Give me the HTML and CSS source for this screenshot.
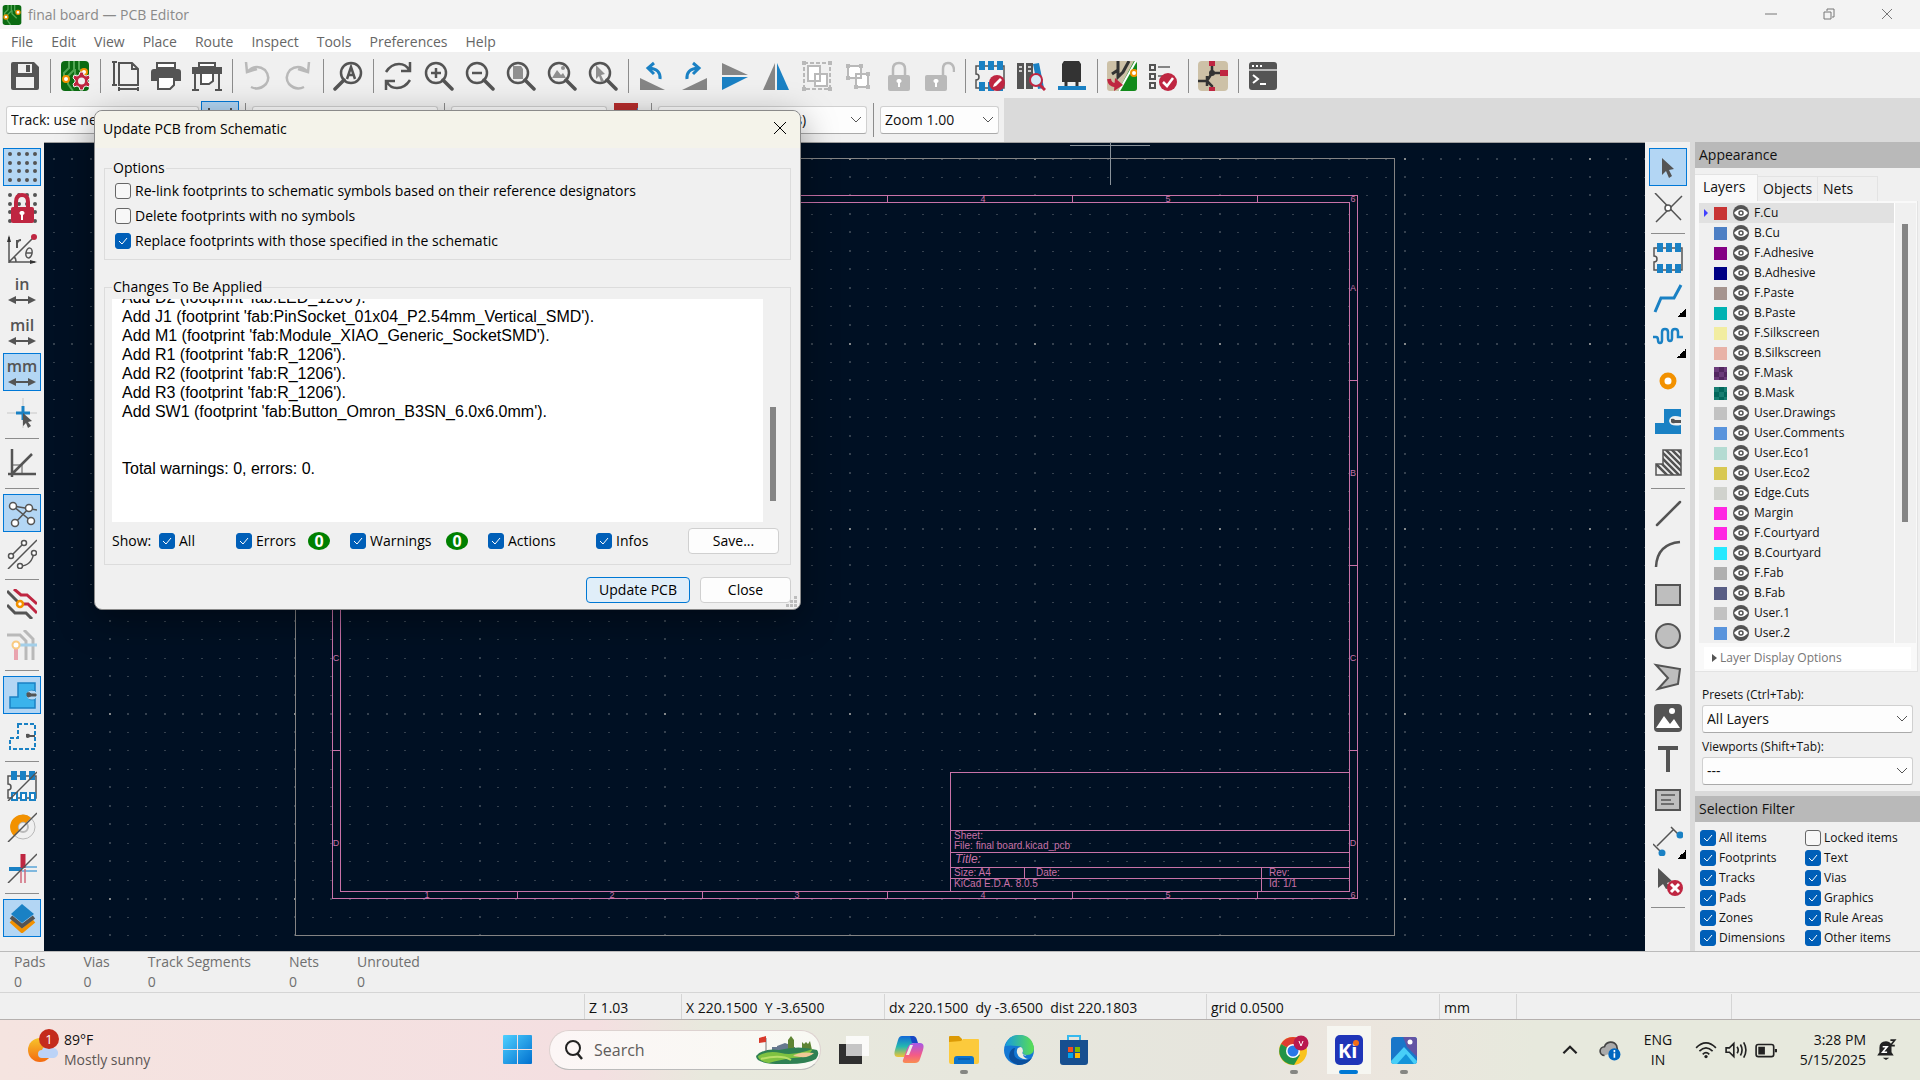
FILE: index.html
```html
<!DOCTYPE html>
<html lang="en">
<head>
    <meta charset="UTF-8">
    <meta name="viewport" content="width=device-width, initial-scale=1.0">
    <title>final board — PCB Editor</title>
    <link rel="stylesheet" href="styles.css">
</head>
<body>
    <!-- icon set -->
    <svg class="sprite" aria-hidden="true">
        <symbol id="board" viewBox="0 0 30 30"><rect x="1" width="28" height="30" rx="4" fill="#0b6b12"/><path d="M9 0v7l-5 5v8M14 0v9l-6 6v8l5 7M19 0v8l5 4M22 20l-7-7v-5" fill="none" stroke="#4fa552" stroke-width="2"/><circle cx="6" cy="18" r="3" fill="#fff" stroke="#f29100" stroke-width="2"/><circle cx="24" cy="11" r="3" fill="#fff" stroke="#f29100" stroke-width="2"/></symbol>
        <symbol id="gear" viewBox="0 0 30 30"><g stroke="#f0f0f0" stroke-width="1"><path d="M20 11h3l1 3 2 1 3-1 1 3-2 2v2l2 2-1 3-3-1-2 1-1 3h-3l-1-3-2-1-3 1-1-3 2-2v-2l-2-2 1-3 3 1 2-1z" fill="#bf2641"/></g><circle cx="21.500" cy="20" r="3.500" fill="#f0f0f0"/></symbol>
        <symbol id="save" viewBox="0 0 30 30"><path d="M3 1h21l5 5v21q0 2-2 2H3q-2 0-2-2V3q0-2 2-2z" fill="#545454"/><path d="M8 3h14v9H8zM6 16h18v11H6z" fill="#f0f0f0"/><path d="M16 4h4v7h-4z" fill="#545454"/></symbol>
        <symbol id="page" viewBox="0 0 30 30"><path d="M9 2h13l6 6v16H9zM22 2v6h6M2 1h5M4 1v23M2 24h5M9 28h19M9 26v4M28 26v4" fill="none" stroke="#545454" stroke-width="2"/></symbol>
        <symbol id="print" viewBox="0 0 30 30"><path d="M6 2h18v5H6z" fill="#fff" stroke="#545454" stroke-width="2"/><path d="M3 8h24q3 0 3 3v9h-6v-5H6v5H0v-9q0-3 3-3z" fill="#545454"/><path d="M7 16h16v8l-4 4H7z" fill="#fff" stroke="#545454" stroke-width="2"/></symbol>
        <symbol id="plot" viewBox="0 0 30 30"><path d="M7 2h16v4H7z" fill="#fff" stroke="#545454" stroke-width="2"/><path d="M0 6h30v7H0z" fill="#545454"/><path d="M3 12v16M27 12v16M0 29h7M23 29h7" stroke="#545454" stroke-width="2"/><path d="M9 12h12v8l-4 3H9z" fill="#fff" stroke="#545454" stroke-width="2"/></symbol>
        <symbol id="undo" viewBox="0 0 30 30"><path d="M4 1l1 10 10-3M5 11Q14 2 23 9q6 7 1 14-7 7-15 3" fill="none" stroke="#b9b9b9" stroke-width="2.500"/></symbol>
        <symbol id="redo" viewBox="0 0 30 30"><path d="M26 1l-1 10-10-3M25 11Q16 2 7 9q-6 7-1 14 7 7 15 3" fill="none" stroke="#b9b9b9" stroke-width="2.500"/></symbol>
        <symbol id="lens" viewBox="0 0 30 30"><circle cx="12" cy="12" r="10" fill="none" stroke="#545454" stroke-width="2.500"/><path d="M19 19l9 9" stroke="#545454" stroke-width="3.500" stroke-linecap="round"/></symbol>
        <symbol id="find" viewBox="0 0 30 30"><circle cx="18" cy="12" r="10" fill="none" stroke="#545454" stroke-width="2.500"/><path d="M11 19l-9 9" stroke="#545454" stroke-width="3.500" stroke-linecap="round"/><path d="M14 18l4-12 4 12M15 14h6" fill="none" stroke="#545454" stroke-width="2.500"/></symbol>
        <symbol id="refresh" viewBox="0 0 30 30"><path d="M3 11Q8 3 16 3q7 0 10 6M27 1v9h-9M27 19q-5 8-13 8-7 0-10-6M3 29v-9h9" fill="none" stroke="#545454" stroke-width="2.500"/></symbol>
        <symbol id="plus" viewBox="0 0 30 30"><path d="M12 7v10M7 12h10" stroke="#545454" stroke-width="2.500"/></symbol>
        <symbol id="minus" viewBox="0 0 30 30"><path d="M7 12h10" stroke="#545454" stroke-width="2.500"/></symbol>
        <symbol id="sheet-fill" viewBox="0 0 30 30"><path d="M7 5h8l2 3v10H7z" fill="#8f8f8f"/></symbol>
        <symbol id="hills" viewBox="0 0 30 30"><path d="M5 17l5-8 4 5 2-2 3 5z" fill="#8f8f8f"/><circle cx="16" cy="7" r="2" fill="#8f8f8f"/></symbol>
        <symbol id="arrow-fill" viewBox="0 0 30 30"><path d="M8 4l9 9-4 1 3 6-3 1-2-6-3 3z" fill="#8f8f8f"/></symbol>
        <symbol id="rot-left" viewBox="0 0 30 30"><path d="M2 17l25 12H2z" fill="#858585"/><path d="M22 18q1-10-11-11M16 2l-6 5 6 6" fill="none" stroke="#1a81c4" stroke-width="3"/></symbol>
        <symbol id="rot-right" viewBox="0 0 30 30"><path d="M28 17L3 29h25z" fill="#858585"/><path d="M8 18Q7 8 19 7M14 2l6 5-6 6" fill="none" stroke="#1a81c4" stroke-width="3"/></symbol>
        <symbol id="flip-v" viewBox="0 0 30 30"><path d="M2 2l26 12H2z" fill="#858585"/><path d="M2 16h26L2 29z" fill="#1a81c4"/></symbol>
        <symbol id="flip-h" viewBox="0 0 30 30"><path d="M14 2v27H2z" fill="#858585"/><path d="M16 2v27h12z" fill="#1a81c4"/></symbol>
        <symbol id="group" viewBox="0 0 30 30"><path d="M2 2h26v26H2z" fill="none" stroke="#b9b9b9" stroke-width="2" stroke-dasharray="4 2"/><path d="M0 0h4v4H0zM26 0h4v4h-4zM0 26h4v4H0zM26 26h4v4h-4z" fill="#b9b9b9"/><path d="M6 5h12v15H6zM13 13h12v12H13z" fill="#fff" stroke="#b9b9b9" stroke-width="2"/></symbol>
        <symbol id="ungroup" viewBox="0 0 30 30"><path d="M5 5h13v12H5zM13 13h12v13H13z" fill="#fff" stroke="#b9b9b9" stroke-width="2"/><path d="M3 3h4v4H3zM16 3h4v4h-4zM3 15h4v4H3zM23 11h4v4h-4zM23 24h4v4h-4zM11 24h4v4h-4z" fill="#b9b9b9"/></symbol>
        <symbol id="lock" viewBox="0 0 30 30"><path d="M9 15V8q0-6 6-6t6 6v7" fill="none" stroke="#b9b9b9" stroke-width="2.500"/><rect x="4" y="14" width="22" height="16" rx="2" fill="#b9b9b9"/><path d="M15 18a2 2 0 0 1 1 4v4h-2v-4a2 2 0 0 1 1-4z" fill="#fff"/></symbol>
        <symbol id="unlock" viewBox="0 0 30 30"><path d="M18 15V8q0-6 5-6t6 6v3" fill="none" stroke="#b9b9b9" stroke-width="2.500"/><rect y="14" width="22" height="16" rx="2" fill="#b9b9b9"/><path d="M11 18a2 2 0 0 1 1 4v4h-2v-4a2 2 0 0 1 1-4z" fill="#fff"/></symbol>
        <symbol id="footprint" viewBox="0 0 30 30"><path d="M29 5H1v8q3 0 3 3t-3 3v8h28z" fill="#f0f0f0" stroke="#545454" stroke-width="1.500"/><path d="M4 0h6v9H4zM13 0h6v9h-6zM22 0h6v9h-6zM4 21h6v9H4zM13 21h6v9h-6zM22 21h6v9h-6z" fill="#1a81c4"/></symbol>
        <symbol id="edit-badge" viewBox="0 0 30 30"><circle cx="22" cy="22" r="8" fill="#bf2641"/><path d="M18 26l1-3 6-6 2 2-6 6z" fill="#fff"/></symbol>
        <symbol id="library" viewBox="0 0 30 30"><path d="M1 2h7v26H1zM10 2h7v26h-7z" fill="#545454"/><path d="M3 6h3M3 10h3M12 6h3M12 10h3" stroke="#ccc" stroke-width="2"/><path d="M17 3l6-1 5 25-6 1z" fill="#1a81c4"/><circle cx="20" cy="19" r="6" fill="#d5eaf6" stroke="#bf2641" stroke-width="2"/><path d="M24 24l5 5" stroke="#bf2641" stroke-width="3"/></symbol>
        <symbol id="chip" viewBox="0 0 30 30"><path d="M7 0h15l2 3v18H5V3z" fill="#333"/><path d="M9 21v4M20 21v4" stroke="#333" stroke-width="3"/><path d="M1 25h28v4H1z" fill="#1a81c4"/></symbol>
        <symbol id="sync" viewBox="0 0 30 30"><rect width="30" height="30" rx="3" fill="#cdc1a7"/><path d="M27 0q3 0 3 3v24q0 3-3 3H11z" fill="#128a1b"/><path d="M11 0v9l-6 4M11 9v7l5-5 6-11" fill="none" stroke="#333" stroke-width="3"/><path d="M29 0L12 30" stroke="#fff" stroke-width="2"/><circle cx="27" cy="12" r="3" fill="#fff" stroke="#f29100" stroke-width="2"/><path d="M2 18q1 7 8 6" fill="none" stroke="#bf2641" stroke-width="4"/><path d="M8 17l8 7-9 6z" fill="#bf2641"/></symbol>
        <symbol id="drc" viewBox="0 0 30 30"><path d="M2 4h5v5H2zM2 13h5v5H2zM2 22h5v5H2z" fill="none" stroke="#545454" stroke-width="2"/><path d="M10 6h12M10 15h7" stroke="#858585" stroke-width="2"/><circle cx="20" cy="21" r="9" fill="#bf2641"/><path d="M15 21l4 4 6-8" fill="none" stroke="#fff" stroke-width="2.500"/></symbol>
        <symbol id="schematic" viewBox="0 0 30 30"><rect width="30" height="30" rx="4" fill="#cdc1a7"/><path d="M14 0v12h9M14 12l-5 8H0M9 20l5 5v5M9 15v10" fill="none" stroke="#333" stroke-width="2.500"/><path d="M11 0h6v5h-6zM22 9h8v6h-8zM11 26h6v4h-6z" fill="#bf2641"/><circle cx="14" cy="12" r="3" fill="#333"/></symbol>
        <symbol id="console" viewBox="0 0 30 30"><rect x="1" y="1" width="28" height="28" rx="3" fill="#545454"/><path d="M1 9h28" stroke="#ddd" stroke-width="1.500"/><path d="M4 5h2M8 5h2M12 5h2M5 14l5 4-5 4M12 23h6" fill="none" stroke="#fff" stroke-width="2"/></symbol>

        <symbol id="dots" viewBox="0 0 30 30"><path d="M3 2h0M12 2h0M20 2h0M28 2h0M3 11h0M12 11h0M20 11h0M28 11h0M3 19h0M12 19h0M20 19h0M28 19h0M3 28h0M12 28h0M20 28h0M28 28h0" stroke="#545454" stroke-width="4" stroke-linecap="round"/></symbol>
        <symbol id="grid-lock" viewBox="0 0 30 30"><path d="M9 15V9q0-7 6-7t6 7v6" fill="none" stroke="#bf2641" stroke-width="4"/><rect x="4" y="14" width="23" height="16" rx="2" fill="#bf2641"/><path d="M15 18a2 2 0 0 1 1 4v5h-2v-5a2 2 0 0 1 1-4z" fill="#fff"/></symbol>
        <symbol id="polar" viewBox="0 0 30 30"><path d="M2 29V3M2 28h26M2 28L26 4M9 28q0-4-2-5" fill="none" stroke="#545454" stroke-width="1.500"/><path d="M0 8l2-7 2 7zM23 26l7 2-7 2z" fill="#333"/><circle cx="27" cy="3" r="3" fill="#bf2641"/><path d="M10 14V6M10 9q1-3 4-3" fill="none" stroke="#545454" stroke-width="2"/><ellipse cx="22" cy="19" rx="3" ry="5" fill="none" stroke="#545454" stroke-width="1.500" transform="rotate(12 22 19)"/><path d="M19 19h6" stroke="#545454" stroke-width="1.500"/></symbol>
        <symbol id="unit" viewBox="0 0 30 30"><path d="M6 25h18" stroke="#545454" stroke-width="2"/><path d="M1 25l8-4v8zM29 25l-8-4v8z" fill="#545454"/></symbol>
        <symbol id="cross-cursor" viewBox="0 0 30 30"><path d="M0 15h30M16 0v30" stroke="#c8c8c8"/><path d="M9 15h14M16 8v14" stroke="#1a81c4" stroke-width="3"/><path d="M16 15l9 8-4 1 3 4-3 2-2-5-3 3z" fill="#545454"/></symbol>
        <symbol id="angle" viewBox="0 0 30 30"><path d="M5 1v28M1 26h28M5 26L25 6" fill="none" stroke="#545454" stroke-width="2.500"/><path d="M5 17h10v9" fill="none" stroke="#545454"/></symbol>
        <symbol id="ratsnest" viewBox="0 0 30 30"><path d="M6 8l18 15M8 25L22 10M6 8l24 4" stroke="#545454" stroke-width="1.500"/><g fill="#fff" stroke="#545454" stroke-width="1.500"><circle cx="6" cy="8" r="3.500"/><circle cx="22" cy="10" r="3.500"/><circle cx="8" cy="25" r="3.500"/><circle cx="24" cy="23" r="3.500"/></g></symbol>
        <symbol id="curved" viewBox="0 0 30 30"><path d="M4 17L17 4M13 27q12 0 14-14M1 30L30 1" fill="none" stroke="#545454" stroke-width="1.500"/><g fill="#fff" stroke="#545454" stroke-width="1.500"><circle cx="4" cy="17" r="2.500"/><circle cx="17" cy="4" r="2.500"/><circle cx="13" cy="27" r="2.500"/><circle cx="27" cy="14" r="2.500"/></g></symbol>
        <symbol id="net-colors" viewBox="0 0 30 30"><path d="M7 0l7 6h6l10 9M13 15h8l9 9" fill="none" stroke="#bf2641" stroke-width="3"/><path d="M0 2l13 13M0 16l8 8h11l6 6" fill="none" stroke="#545454" stroke-width="3"/><circle cx="13" cy="15" r="3" fill="#fff" stroke="#f29100" stroke-width="2.500"/></symbol>
        <symbol id="contrast" viewBox="0 0 30 30"><path d="M0 5h13l6 6v19M17 0l9 9v21" fill="none" stroke="#b9b9b9" stroke-width="3"/><path d="M9 15v15" stroke="#e9a3ae" stroke-width="4"/><path d="M9 15h21" stroke="#a3cfe9" stroke-width="3"/><circle cx="9" cy="15" r="3.500" fill="#fff" stroke="#f9ca80" stroke-width="2"/></symbol>
        <symbol id="zone" viewBox="0 0 30 30"><path d="M11 3h17v8q-7-2-7 4t7 4v9H3V17h8z" fill="#3ab3ec" stroke="#1a81c4" stroke-width="1.500"/><path d="M28 11q-8-2-8 4t8 4z" fill="#b3d6f4"/><path d="M20 13q3-1 4 1h5v2h-5q-3 2-4 0z" fill="#545454" stroke="#545454"/></symbol>
        <symbol id="zone-outline" viewBox="0 0 30 30"><path d="M11 3h17v25H3V17h8z" fill="none" stroke="#1a81c4" stroke-width="2" stroke-dasharray="4 2"/><path d="M19 13q3-1 4 1h5v2h-5q-3 2-4 0z" fill="#545454"/></symbol>
        <symbol id="pad-sketch" viewBox="0 0 30 30"><path d="M29 5H1v8q3 0 3 3t-3 3v8h28z" fill="none" stroke="#545454" stroke-width="1.500"/><path d="M4 0h6v9H4zM13 0h6v9h-6zM22 0h6v9h-6z" fill="#1a81c4"/><path d="M5 22h5v7H5zM14 22h5v7h-5zM23 22h5v7h-5z" fill="#fff" stroke="#1a81c4" stroke-width="2"/><path d="M1 30L30 1" stroke="#545454" stroke-width="1.500"/></symbol>
        <symbol id="via-sketch" viewBox="0 0 30 30"><circle cx="16" cy="15" r="12" fill="none" stroke="#b9b9b9"/><circle cx="16" cy="15" r="5" fill="none" stroke="#b9b9b9" stroke-width="2"/><path d="M7 24A12 12 0 0 1 24 6l-5 5a5 5 0 0 0-7 7z" fill="#f29100"/><path d="M1 30L30 1" stroke="#545454" stroke-width="1.500"/></symbol>
        <symbol id="track-sketch" viewBox="0 0 30 30"><path d="M2 16h13" stroke="#1a81c4" stroke-width="4"/><path d="M15 14h15M15 18h15" stroke="#5ba5d8" stroke-width="1.500"/><path d="M16 1v14" stroke="#bf2641" stroke-width="5"/><path d="M14 16v14M18 16v14" stroke="#d0687b" stroke-width="1.500"/><path d="M1 30L30 1" stroke="#545454" stroke-width="1.500"/></symbol>
        <symbol id="layers" viewBox="0 0 30 30"><path d="M4 18l11 10 12-10" fill="none" stroke="#f29100" stroke-width="4"/><path d="M4 14l11 9 12-9" fill="none" stroke="#545454" stroke-width="4"/><path d="M15 1l12 10-12 9L4 11z" fill="#1a81c4"/></symbol>

        <symbol id="arrow" viewBox="0 0 30 30"><path d="M9 6l12 11-5 1 3 6-3 2-3-7-4 4z" fill="#545454"/></symbol>
        <symbol id="local-rats" viewBox="0 0 30 30"><path d="M2 0l26 27M29 3L3 29" stroke="#545454" stroke-width="1.500"/><circle cx="15" cy="15" r="3" fill="#fff" stroke="#545454" stroke-width="1.500"/></symbol>
        <symbol id="route" viewBox="0 0 30 30"><path d="M2 28l6-14h13l7-13" fill="none" stroke="#1a81c4" stroke-width="3"/></symbol>
        <symbol id="tune" viewBox="0 0 30 30"><path d="M0 12h3q2 0 2 3t2 3 2-3V7q0-3 3-3t3 3v6q0 3 2 3t2-3V7q0-3 3-3t3 3v5h5" fill="none" stroke="#1a81c4" stroke-width="2.500"/></symbol>
        <symbol id="via" viewBox="0 0 30 30"><circle cx="15" cy="15" r="6" fill="#fff" stroke="#f29100" stroke-width="5"/></symbol>
        <symbol id="zone-add" viewBox="0 0 30 30"><path d="M11 2h17v25H2V16h9z" fill="#1a81c4"/><path d="M28 10q-11-3-12 4 1 6 12 4z" fill="#f0f0f0"/><path d="M18 12q3-1 4 1h6v3h-6q-3 1-4-1z" fill="#545454"/></symbol>
        <symbol id="rule-area" viewBox="0 0 30 30"><clipPath id="ra"><path d="M10 2h18v25H3V16h7z"/></clipPath><path d="M3-8l35 35M3-2l35 35M3 4l35 35M3 10l35 35M3 16l35 35M3-14l35 35M3-20l35 35" stroke="#545454" stroke-width="2.500" clip-path="url(#ra)"/><path d="M10 2h18v25H3V16h7z" fill="none" stroke="#545454" stroke-width="1.500"/></symbol>
        <symbol id="line" viewBox="0 0 30 30"><path d="M4 27L27 4" stroke="#545454" stroke-width="2.500" stroke-linecap="round"/></symbol>
        <symbol id="arc" viewBox="0 0 30 30"><path d="M3 28Q4 5 27 3" fill="none" stroke="#545454" stroke-width="2.500"/></symbol>
        <symbol id="rect" viewBox="0 0 30 30"><path d="M3 5h24v20H3z" fill="#bebebe" stroke="#545454" stroke-width="2"/></symbol>
        <symbol id="circle" viewBox="0 0 30 30"><circle cx="15" cy="15" r="12" fill="#bebebe" stroke="#545454" stroke-width="2"/></symbol>
        <symbol id="poly" viewBox="0 0 30 30"><path d="M3 3l24 4-2 15-20 5 10-11z" fill="#bebebe" stroke="#545454" stroke-width="2"/></symbol>
        <symbol id="image" viewBox="0 0 30 30"><rect x="1" y="1" width="28" height="28" rx="4" fill="#545454"/><path d="M3 25l8-12 6 8 4-5 6 9z" fill="#fff"/><circle cx="19" cy="8" r="3" fill="#fff"/></symbol>
        <symbol id="text" viewBox="0 0 30 30"><path d="M5 4h20M15 4v24" stroke="#545454" stroke-width="4"/></symbol>
        <symbol id="textbox" viewBox="0 0 30 30"><path d="M3 5h24v20H3z" fill="#bebebe" stroke="#545454" stroke-width="2"/><path d="M8 10h14M8 15h10M8 19h13" stroke="#545454" stroke-width="1.500"/></symbol>
        <symbol id="dimension" viewBox="0 0 30 30"><path d="M4 20L20 4M18 1l9 9M0 18l8 8" stroke="#545454" stroke-width="1.500"/><circle cx="27" cy="9" r="3.500" fill="#1a81c4"/><circle cx="9" cy="27" r="3.500" fill="#1a81c4"/></symbol>
        <symbol id="delete" viewBox="0 0 30 30"><path d="M5 1l14 13-5 2 3 5-4 1-3-5-5 4z" fill="#545454"/><circle cx="22" cy="21" r="8" fill="#bf2641"/><path d="M18 17l8 8M26 17l-8 8" stroke="#fff" stroke-width="3"/></symbol>
        <symbol id="eye" viewBox="0 0 16 16"><circle cx="8" cy="8" r="8" fill="#545454"/><path d="M1 8q7-8 14 0-7 8-14 0z" fill="#fff"/><circle cx="8" cy="8" r="2" fill="#fff" stroke="#545454" stroke-width="1.500"/></symbol>
    </svg>

    <header class="titlebar">
        <svg class="app-icon"><use href="#board"/></svg>
        <h1>final board — PCB Editor</h1>
        <div class="window-buttons">
            <button aria-label="Minimize"><svg viewBox="0 0 12 12"><path d="M0 6h12"/></svg></button>
            <button aria-label="Restore"><svg viewBox="0 0 12 12"><path d="M1 4h7v7H1zM4 3V1h7v8H9"/></svg></button>
            <button aria-label="Close window"><svg viewBox="0 0 12 12"><path d="M1 1l10 10M11 1L1 11"/></svg></button>
        </div>
    </header>

    <nav class="menubar">
        <a href="#">File</a>
        <a href="#">Edit</a>
        <a href="#">View</a>
        <a href="#">Place</a>
        <a href="#">Route</a>
        <a href="#">Inspect</a>
        <a href="#">Tools</a>
        <a href="#">Preferences</a>
        <a href="#">Help</a>
    </nav>

    <div class="toolbar">
        <button class="tool" aria-label="Save"><svg><use href="#save"/></svg></button>
        <span class="sep"></span>
        <button class="tool" aria-label="Board setup"><svg><use href="#board"/><use href="#gear"/></svg></button>
        <span class="sep"></span>
        <button class="tool" aria-label="Page settings"><svg><use href="#page"/></svg></button>
        <button class="tool" aria-label="Print"><svg><use href="#print"/></svg></button>
        <button class="tool" aria-label="Plot"><svg><use href="#plot"/></svg></button>
        <span class="sep"></span>
        <button class="tool" aria-label="Undo"><svg><use href="#undo"/></svg></button>
        <button class="tool" aria-label="Redo"><svg><use href="#redo"/></svg></button>
        <span class="sep"></span>
        <button class="tool" aria-label="Find"><svg><use href="#find"/></svg></button>
        <span class="sep"></span>
        <button class="tool" aria-label="Refresh"><svg><use href="#refresh"/></svg></button>
        <button class="tool" aria-label="Zoom in"><svg><use href="#lens"/><use href="#plus"/></svg></button>
        <button class="tool" aria-label="Zoom out"><svg><use href="#lens"/><use href="#minus"/></svg></button>
        <button class="tool" aria-label="Zoom to fit page"><svg><use href="#lens"/><use href="#sheet-fill"/></svg></button>
        <button class="tool" aria-label="Zoom to objects"><svg><use href="#lens"/><use href="#hills"/></svg></button>
        <button class="tool" aria-label="Zoom to selection"><svg><use href="#lens"/><use href="#arrow-fill"/></svg></button>
        <span class="sep"></span>
        <button class="tool" aria-label="Rotate left"><svg><use href="#rot-left"/></svg></button>
        <button class="tool" aria-label="Rotate right"><svg><use href="#rot-right"/></svg></button>
        <button class="tool" aria-label="Mirror vertically"><svg><use href="#flip-v"/></svg></button>
        <button class="tool" aria-label="Mirror horizontally"><svg><use href="#flip-h"/></svg></button>
        <button class="tool" aria-label="Group"><svg><use href="#group"/></svg></button>
        <button class="tool" aria-label="Ungroup"><svg><use href="#ungroup"/></svg></button>
        <button class="tool" aria-label="Lock"><svg><use href="#lock"/></svg></button>
        <button class="tool" aria-label="Unlock"><svg><use href="#unlock"/></svg></button>
        <span class="sep"></span>
        <button class="tool" aria-label="Footprint editor"><svg><use href="#footprint"/><use href="#edit-badge"/></svg></button>
        <button class="tool" aria-label="Footprint library browser"><svg><use href="#library"/></svg></button>
        <button class="tool" aria-label="3D viewer"><svg><use href="#chip"/></svg></button>
        <span class="sep"></span>
        <button class="tool" aria-label="Update PCB from schematic"><svg><use href="#sync"/></svg></button>
        <button class="tool" aria-label="Design rules checker"><svg><use href="#drc"/></svg></button>
        <span class="sep"></span>
        <button class="tool" aria-label="Open schematic"><svg><use href="#schematic"/></svg></button>
        <span class="sep"></span>
        <button class="tool" aria-label="Scripting console"><svg><use href="#console"/></svg></button>
    </div>

    <div class="options-row">
        <div class="options-bar">
            <select class="track-select" aria-label="Track width"><option>Track: use netclass width</option></select>
            <button class="tool active" aria-label="Use existing track width"><svg viewBox="0 0 30 30"><path d="M4 3v22M26 3v22M4 15h22" stroke="#545454" stroke-width="2"/></svg></button>
            <span class="sep"></span>
            <select class="via-select" aria-label="Via size"><option>Via: use netclass sizes</option></select>
            <span class="sep"></span>
            <select class="layer-select" aria-label="Layer"><option>F.Cu (PgUp)</option></select>
            <span class="layer-pair"></span>
            <span class="sep"></span>
            <select class="grid-select" aria-label="Grid"><option>0.0500 mm (1.97 mils)</option></select>
            <span class="sep"></span>
            <select class="zoom-select" aria-label="Zoom"><option>Zoom 1.00</option></select>
        </div>
    </div>

    <main class="workspace">
        <div class="side-tools">
            <button class="tool active" aria-label="Show grid"><svg><use href="#dots"/></svg></button>
            <button class="tool" aria-label="Grid overrides"><svg><use href="#dots"/><use href="#grid-lock"/></svg></button>
            <button class="tool" aria-label="Polar coordinates"><svg><use href="#polar"/></svg></button>
            <button class="tool" aria-label="Inches"><svg class="unit"><use href="#unit"/><text x="15" y="15">in</text></svg></button>
            <button class="tool" aria-label="Mils"><svg class="unit"><use href="#unit"/><text x="15" y="15">mil</text></svg></button>
            <button class="tool active" aria-label="Millimeters"><svg class="unit"><use href="#unit"/><text x="15" y="15">mm</text></svg></button>
            <button class="tool" aria-label="Full-window crosshairs"><svg><use href="#cross-cursor"/></svg></button>
            <span class="sep"></span>
            <button class="tool" aria-label="Limit angles"><svg><use href="#angle"/></svg></button>
            <span class="sep"></span>
            <button class="tool active" aria-label="Show ratsnest"><svg><use href="#ratsnest"/></svg></button>
            <button class="tool" aria-label="Curved ratsnest"><svg><use href="#curved"/></svg></button>
            <span class="sep"></span>
            <button class="tool" aria-label="Net highlighting"><svg><use href="#net-colors"/></svg></button>
            <button class="tool" aria-label="Inactive layer view"><svg><use href="#contrast"/></svg></button>
            <span class="sep"></span>
            <button class="tool active" aria-label="Zone fills"><svg><use href="#zone"/></svg></button>
            <button class="tool" aria-label="Zone outlines"><svg><use href="#zone-outline"/></svg></button>
            <span class="sep"></span>
            <button class="tool" aria-label="Sketch pads"><svg><use href="#pad-sketch"/></svg></button>
            <button class="tool" aria-label="Sketch vias"><svg><use href="#via-sketch"/></svg></button>
            <button class="tool" aria-label="Sketch tracks"><svg><use href="#track-sketch"/></svg></button>
            <span class="sep"></span>
            <button class="tool active" aria-label="Appearance manager"><svg><use href="#layers"/></svg></button>
        </div>

        <svg class="canvas" role="img" aria-label="Board drawing sheet">
            <defs>
                <pattern id="grid" x="65" y="16" width="185" height="185" patternUnits="userSpaceOnUse">
                    <path id="dot-row" d="M19 0v1M37 0v1M56 0v1M74 0v1M93 0v1M111 0v1M130 0v1M148 0v1M167 0v1" stroke="#69727a"/>
                    <path d="M0 0h2v2H0z" fill="#84888a"/>
                    <use href="#dot-row" y="1"/>
                    <use href="#dot-row" y="19"/><use href="#dot-row" y="37"/><use href="#dot-row" y="56"/>
                    <use href="#dot-row" y="74"/><use href="#dot-row" y="93"/><use href="#dot-row" y="111"/>
                    <use href="#dot-row" y="130"/><use href="#dot-row" y="148"/><use href="#dot-row" y="167"/>
                    <path d="M0 19h2M0 37h2M0 56h2M0 74h2M0 93h2M0 111h2M0 130h2M0 148h2M0 167h2" stroke="#69727a"/>
                </pattern>
            </defs>
            <rect width="100%" height="100%" fill="url(#grid)"/>
            <g class="sheet">
                <rect class="paper" x="251" y="16" width="1099" height="777"/>
                <path d="M288 53h1025v703H288zM296 60h1009v689H296z"/>
                <path d="M473 53v7M658 53v7M843 53v7M1028 53v7M1213 53v7M473 749v7M658 749v7M843 749v7M1028 749v7M1213 749v7"/>
                <path d="M288 238h8M288 423h8M288 608h8M1305 238h8M1305 423h8M1305 608h8"/>
                <path d="M906 749V630h399M906 688h399M906 710h399M906 725h399M906 736h399M980 725v11M1217 725v24"/>
            </g>
            <g class="frame-marks">
                <text x="383" y="60">1</text><text x="568" y="60">2</text><text x="753" y="60">3</text><text x="939" y="60">4</text><text x="1124" y="60">5</text><text x="1309" y="60">6</text>
                <text x="383" y="756">1</text><text x="568" y="756">2</text><text x="753" y="756">3</text><text x="939" y="756">4</text><text x="1124" y="756">5</text><text x="1309" y="756">6</text>
                <text x="292" y="149">A</text><text x="292" y="334">B</text><text x="292" y="519">C</text><text x="292" y="704">D</text>
                <text x="1309" y="149">A</text><text x="1309" y="334">B</text><text x="1309" y="519">C</text><text x="1309" y="704">D</text>
            </g>
            <g class="title-block">
                <text x="910" y="697">Sheet:</text>
                <text x="910" y="707">File: final board.kicad_pcb</text>
                <text class="title" x="911" y="721">Title:</text>
                <text x="910" y="734">Size: A4</text>
                <text x="992" y="734">Date:</text>
                <text x="1225" y="734">Rev:</text>
                <text x="910" y="745">KiCad E.D.A. 8.0.5</text>
                <text x="1225" y="745">Id: 1/1</text>
            </g>
            <path class="crosshair" d="M1026 3h80M1066 0v43"/>
        </svg>

        <div class="side-tools draw-tools">
            <button class="tool active" aria-label="Select"><svg><use href="#arrow"/></svg></button>
            <button class="tool" aria-label="Local ratsnest"><svg><use href="#local-rats"/></svg></button>
            <span class="sep"></span>
            <button class="tool" aria-label="Place footprint"><svg><use href="#footprint"/></svg></button>
            <button class="tool more" aria-label="Route tracks"><svg><use href="#route"/></svg></button>
            <button class="tool more" aria-label="Tune length"><svg><use href="#tune"/></svg></button>
            <button class="tool" aria-label="Place via"><svg><use href="#via"/></svg></button>
            <button class="tool" aria-label="Draw zone"><svg><use href="#zone-add"/></svg></button>
            <button class="tool" aria-label="Draw rule area"><svg><use href="#rule-area"/></svg></button>
            <span class="sep"></span>
            <button class="tool" aria-label="Draw line"><svg><use href="#line"/></svg></button>
            <button class="tool" aria-label="Draw arc"><svg><use href="#arc"/></svg></button>
            <button class="tool" aria-label="Draw rectangle"><svg><use href="#rect"/></svg></button>
            <button class="tool" aria-label="Draw circle"><svg><use href="#circle"/></svg></button>
            <button class="tool" aria-label="Draw polygon"><svg><use href="#poly"/></svg></button>
            <button class="tool" aria-label="Place image"><svg><use href="#image"/></svg></button>
            <button class="tool" aria-label="Place text"><svg><use href="#text"/></svg></button>
            <button class="tool" aria-label="Place text box"><svg><use href="#textbox"/></svg></button>
            <button class="tool more" aria-label="Place dimension"><svg><use href="#dimension"/></svg></button>
            <button class="tool" aria-label="Delete"><svg><use href="#delete"/></svg></button>
            <span class="sep"></span>
        </div>

        <aside class="panel">
            <h2>Appearance</h2>
            <div class="tabs">
                <button class="tab selected">Layers</button>
                <button class="tab">Objects</button>
                <button class="tab">Nets</button>
            </div>
            <div class="layers-page">
                <div class="layers-scroll">
                    <ul id="layer-list"></ul>
                    <div class="scrollbar"><span></span></div>
                </div>
                <button class="display-options"><span class="triangle"></span>Layer Display Options</button>
            </div>
            <div class="presets">
                <label for="presets">Presets (Ctrl+Tab):</label>
                <select id="presets"><option>All Layers</option></select>
                <label for="viewports">Viewports (Shift+Tab):</label>
                <select id="viewports"><option>---</option></select>
            </div>
            <h2 class="filter-title">Selection Filter</h2>
            <div class="filter">
                <label><input type="checkbox" checked>All items</label>
                <label><input type="checkbox">Locked items</label>
                <label><input type="checkbox" checked>Footprints</label>
                <label><input type="checkbox" checked>Text</label>
                <label><input type="checkbox" checked>Tracks</label>
                <label><input type="checkbox" checked>Vias</label>
                <label><input type="checkbox" checked>Pads</label>
                <label><input type="checkbox" checked>Graphics</label>
                <label><input type="checkbox" checked>Zones</label>
                <label><input type="checkbox" checked>Rule Areas</label>
                <label><input type="checkbox" checked>Dimensions</label>
                <label><input type="checkbox" checked>Other items</label>
            </div>
        </aside>
    </main>

    <dl class="board-info">
        <div><dt>Pads</dt><dd>0</dd></div>
        <div><dt>Vias</dt><dd>0</dd></div>
        <div><dt>Track Segments</dt><dd>0</dd></div>
        <div><dt>Nets</dt><dd>0</dd></div>
        <div><dt>Unrouted</dt><dd>0</dd></div>
    </dl>

    <div class="statusbar">
        <span></span>
        <span>Z 1.03</span>
        <span>X 220.1500&nbsp; Y -3.6500</span>
        <span>dx 220.1500&nbsp; dy -3.6500&nbsp; dist 220.1803</span>
        <span>grid 0.0500</span>
        <span>mm</span>
        <span></span>
        <span></span>
    </div>

    <section class="dialog" role="dialog" aria-labelledby="dialog-title">
        <div class="dialog-title">
            <h2 id="dialog-title">Update PCB from Schematic</h2>
            <button aria-label="Close dialog"><svg viewBox="0 0 12 12"><path d="M0 0l12 12M12 0L0 12"/></svg></button>
        </div>
        <fieldset class="dialog-options">
            <legend>Options</legend>
            <label><input type="checkbox">Re-link footprints to schematic symbols based on their reference designators</label>
            <label><input type="checkbox">Delete footprints with no symbols</label>
            <label><input type="checkbox" checked>Replace footprints with those specified in the schematic</label>
        </fieldset>
        <fieldset class="dialog-changes">
            <legend>Changes To Be Applied</legend>
            <div class="log-row">
                <div class="log">
                    <p>Add D2 (footprint 'fab:LED_1206').</p>
                    <p>Add J1 (footprint 'fab:PinSocket_01x04_P2.54mm_Vertical_SMD').</p>
                    <p>Add M1 (footprint 'fab:Module_XIAO_Generic_SocketSMD').</p>
                    <p>Add R1 (footprint 'fab:R_1206').</p>
                    <p>Add R2 (footprint 'fab:R_1206').</p>
                    <p>Add R3 (footprint 'fab:R_1206').</p>
                    <p>Add SW1 (footprint 'fab:Button_Omron_B3SN_6.0x6.0mm').</p>
                    <p class="total">Total warnings: 0, errors: 0.</p>
                </div>
                <div class="scrollbar"><span></span></div>
            </div>
            <div class="show-row">
                <span>Show:</span>
                <label class="all"><input type="checkbox" checked>All</label>
                <label class="errors"><input type="checkbox" checked>Errors</label>
                <b class="badge">0</b>
                <label class="warnings"><input type="checkbox" checked>Warnings</label>
                <b class="badge">0</b>
                <label class="actions"><input type="checkbox" checked>Actions</label>
                <label class="infos"><input type="checkbox" checked>Infos</label>
                <button class="push">Save...</button>
            </div>
        </fieldset>
        <div class="dialog-buttons">
            <button class="push primary">Update PCB</button>
            <button class="push">Close</button>
        </div>
        <svg class="grip" viewBox="0 0 11 11"><path d="M8 0h3v3H8zM8 4h3v3H8zM4 4h3v3H4zM8 8h3v3H8zM4 8h3v3H4zM0 8h3v3H0z" fill="#bdbdbd"/></svg>
    </section>

    <footer class="taskbar">
        <a class="weather" href="#">
            <svg viewBox="0 0 36 44">
                <defs><linearGradient id="sun" x2="0" y2="1"><stop stop-color="#f6c52c"/><stop offset="1" stop-color="#f46a10"/></linearGradient></defs>
                <circle cx="14" cy="22" r="12" fill="url(#sun)"/>
                <path d="M16 30a4 4 0 0 1 0-8 6 6 0 0 1 10-2 5 5 0 0 1 2 10z" fill="#bcd3f7"/>
                <circle cx="23" cy="11" r="10" fill="#c42b1c"/>
                <text x="23" y="16" text-anchor="middle" fill="#fff" font-size="13">1</text>
            </svg>
            <span>89°F<br><small>Mostly sunny</small></span>
        </a>
        <button class="task" aria-label="Start"><svg viewBox="0 0 30 30"><defs><linearGradient id="win" x2="1" y2="1"><stop stop-color="#4fd0ff"/><stop offset="1" stop-color="#0070cf"/></linearGradient></defs><path d="M0 1q0-1 1-1h13v14H0zM15 0h13q1 0 1 1v13H15zM0 15h14v14H1q-1 0-1-1zM15 15h14v13q0 1-1 1H15z" fill="url(#win)"/></svg></button>
        <div class="search">
            <svg viewBox="0 0 20 20"><circle cx="9" cy="8" r="7" fill="none" stroke="#222" stroke-width="2"/><path d="M13 13l5 6" stroke="#222" stroke-width="2.500"/></svg>
            <input type="text" placeholder="Search" aria-label="Search">
            <svg class="golf" viewBox="0 0 64 30">
                <path d="M22 11l8-3 8 3v5H22zM17 12h7v5h-7zM36 12h4v5h-4z" fill="#66788e"/>
                <path d="M33 14V5l3-4 3 4v9M47 15V7l2 2 2-2 2 2 2-3 2 9" fill="#5e8434"/>
                <path d="M1 21Q8 13 24 15q20-5 38 0 3 4-1 9-8 5-28 5-32 1-32-8z" fill="#2f8053"/>
                <path d="M3 21q10-6 23-3 12 3 32-4-5 9-20 9-14 2-24 5Q3 26 3 21z" fill="#7fc241"/>
                <path d="M6 24q20-5 30 1" stroke="#b9df68" stroke-width="2" fill="none"/>
                <path d="M38 21q6-5 21-3-5 5-14 4z" fill="#f0c896"/>
                <path d="M11 3v13" stroke="#777"/><path d="M4 3l7-2v6L4 8z" fill="#d8392b"/>
            </svg>
        </div>
        <button class="task" aria-label="Task view"><svg viewBox="0 0 30 30"><path d="M0 9h23v20H0z" fill="#2f2f2f"/><path d="M7 1h23v20H7z" fill="#fdfdfd" opacity=".85"/><path d="M7 9h16v12H7z" fill="#c5c5c5"/></svg></button>
        <button class="task" aria-label="Copilot"><svg viewBox="0 0 30 30"><defs><linearGradient id="cp1" x2="0" y2="1"><stop stop-color="#1269d8"/><stop offset=".5" stop-color="#24b8b0"/><stop offset="1" stop-color="#f3c534"/></linearGradient><linearGradient id="cp2" x2="0" y2="1"><stop stop-color="#a658e8"/><stop offset=".6" stop-color="#f55b87"/><stop offset="1" stop-color="#f98e50"/></linearGradient></defs><path d="M8 1h10q3 0 2 3l-4 12q-2 6-6 6H4q-5 0-3-7L4 5q1-4 4-4z" fill="url(#cp1)"/><path d="M16 1h3q3 0 4 4l1 3h-6z" fill="#1748c5"/><path d="M20 8h6q5 0 3 7l-3 9q-1 4-5 4H11q-3 0-2-3l4-11q2-6 7-6z" fill="url(#cp2)"/><path d="M16 10h3l-4 10h-3z" fill="#f0eee6"/></svg></button>
        <button class="task running" aria-label="File Explorer"><svg viewBox="0 0 30 30"><path d="M0 2q0-1 1-1h9l3 3v5H0z" fill="#dc9a05"/><path d="M0 7l12-1 2-2h15q1 0 1 1v22q0 2-2 2H2q-2 0-2-2z" fill="#fcca3c"/><path d="M5 29v-5q0-3 3-3h14q3 0 3 3v5z" fill="#0d74cd"/><path d="M9 24h12" stroke="#064d91"/></svg></button>
        <button class="task" aria-label="Edge"><svg viewBox="0 0 30 30"><defs><linearGradient id="ed" x2="1"><stop stop-color="#169ae0"/><stop offset="1" stop-color="#5be04f"/></linearGradient></defs><circle cx="15" cy="15" r="15" fill="#1478d4"/><path d="M1 11Q4 0 15 0q13 0 15 13 0 7-7 7-5 0-4-4 0-5-6-5-7-1-12 0z" fill="url(#ed)"/><path d="M11 13q-4 12 9 12 5 0 8-2-5 7-13 7Q2 27 6 17q2-4 5-4z" fill="#0b509e"/><path d="M17 12q-5 0-4 6 2 7 11 6-4-1-5-4 4 1 3 0-5 0-3-4 0-3-2-4z" fill="#ebede2"/></svg></button>
        <button class="task" aria-label="Store"><svg viewBox="0 0 30 30"><path d="M9 6V1h12v5" fill="none" stroke="#36b9ee" stroke-width="2"/><path d="M1 5h28v22q0 3-3 3H4q-3 0-3-3z" fill="#174f90"/><path d="M9 12h5v5H9z" fill="#f25022"/><path d="M16 12h5v5h-5z" fill="#7fba00"/><path d="M9 18h5v5H9z" fill="#00a4ef"/><path d="M16 18h5v5h-5z" fill="#ffb900"/></svg></button>
        <button class="task running chrome" aria-label="Chrome"><svg viewBox="0 0 30 30"><circle cx="14" cy="16" r="14" fill="#f9c31d"/><path d="M14 16L2 9Q6 2 14 2q8 0 12 7z" fill="#df3c30"/><path d="M14 16L2 9q-5 11 4 18 4 3 9 3l6-10z" fill="#229447"/><circle cx="14" cy="16" r="7" fill="#fff"/><circle cx="14" cy="16" r="5.500" fill="#2877e8"/><circle cx="22" cy="8" r="7.500" fill="#b9194f"/><path d="M20 6l2 5 2-5" fill="none" stroke="#fff"/></svg></button>
        <button class="task current" aria-label="KiCad"><svg viewBox="0 0 30 30"><rect x="1" width="28" height="30" rx="5" fill="#1f35b8"/><text x="4" y="23" fill="#fff" font-size="20" font-weight="700">Ki</text><circle cx="22" cy="8" r="3" fill="#f36d16"/></svg></button>
        <button class="task running" aria-label="Photos"><svg viewBox="0 0 30 30"><rect x="2" y="2" width="26" height="27" rx="3" fill="#1876c9"/><path d="M14 2h11q3 0 3 3v17L18 12z" fill="#6354a4"/><path d="M2 26L15 12l13 14q0 3-3 3H5q-3 0-3-3z" fill="#48cef7"/><path d="M8 29l9-10 8 10z" fill="#1494d9"/><circle cx="21" cy="7" r="2.500" fill="#fff"/></svg></button>
        <div class="tray">
            <button aria-label="Hidden icons"><svg viewBox="0 0 20 20"><path d="M4 13l6-6 6 6" fill="none" stroke="#222" stroke-width="2"/></svg></button>
            <button aria-label="Cloud status"><svg viewBox="0 0 20 20"><path d="M5 15a4 4 0 0 1 0-8 6 6 0 0 1 11-1l1 5" fill="#aaa" stroke="#444" stroke-width="1.500"/><circle cx="14" cy="14" r="5.500" fill="#0067c0"/><path d="M14 13v4M14 10v2" stroke="#fff" stroke-width="1.500"/></svg></button>
            <button class="language">ENG<br>IN</button>
            <button class="quick" aria-label="Network, volume and battery">
                <svg viewBox="0 0 20 20"><path d="M1 8q9-9 18 0M4 11q6-6 12 0M7 14q3-3 6 0" fill="none" stroke="#222" stroke-width="1.500"/><circle cx="10" cy="16" r="1.500" fill="#222"/></svg>
                <svg viewBox="0 0 20 20"><path d="M1 8h3l4-4v12l-4-4H1zM11 7q2 3 0 6M14 5q3 5 0 10M17 3q4 7 0 14" fill="none" stroke="#222" stroke-width="1.500"/></svg>
                <svg viewBox="0 0 20 20"><rect x="1" y="5" width="16" height="11" rx="2" fill="none" stroke="#222" stroke-width="1.500"/><path d="M3 7h6v7H3zM18 9h2v3h-2z" fill="#222"/></svg>
            </button>
            <button class="clock">3:28 PM<br>5/15/2025</button>
            <button aria-label="Notifications"><svg viewBox="0 0 20 20"><path d="M2 15l2-3V8q0-6 6-6 3 0 5 3v7l2 3z" fill="#222"/><path d="M7 17h6l-3 2z" fill="#222"/><path d="M7 7h4l-4 5h4" fill="none" stroke="#fff" stroke-width="1.500"/><path d="M14 1h4l-4 5h4" fill="none" stroke="#222" stroke-width="1.500"/></svg></button>
        </div>
    </footer>

    <script src="script.js"></script>
</body>
</html>
```

FILE: styles.css
```css
* {
    box-sizing: border-box;
}

body {
    margin: 0;
    height: 100vh;
    display: flex;
    flex-direction: column;
    overflow: hidden;
    font-family: "Open Sans", "Noto Sans", sans-serif;
    font-size: 14px;
    line-height: 20px;
    color: #111;
    background: #f0f0f0;
}

button, select, input {
    font: inherit;
    color: inherit;
}

button {
    border: 0;
    padding: 0;
    background: none;
}

h1, h2, p, ul, dl, dd {
    margin: 0;
    padding: 0;
    font-size: 14px;
    font-weight: normal;
}

.sprite {
    position: absolute;
    width: 0;
    height: 0;
}

/* title and menu */
.titlebar {
    flex: none;
    height: 29px;
    display: flex;
    align-items: center;
    gap: 6px;
    padding: 0 4px 0 2px;
    background: #f3f3f3;
    color: #8a8a8a;
}

.app-icon {
    width: 20px;
    height: 20px;
}

.window-buttons {
    margin-left: auto;
    display: flex;
}

.window-buttons button {
    width: 58px;
    height: 28px;
}

.window-buttons svg,
.dialog-title svg {
    width: 12px;
    height: 12px;
    fill: none;
    stroke: #777;
}

.menubar {
    flex: none;
    height: 23px;
    display: flex;
    align-items: center;
    gap: 18px;
    padding: 2px 0 0 11px;
    background: #fff;
}

.menubar a {
    color: #666;
    text-decoration: none;
}

/* toolbars */
.toolbar {
    flex: none;
    height: 46px;
    display: flex;
    align-items: center;
    padding: 2px 5px 0;
}

.tool {
    flex: none;
    position: relative;
    width: 38px;
    height: 38px;
    margin: 1px 2px 2px 1px;
    display: flex;
    align-items: center;
    justify-content: center;
    border: 1px solid transparent;
}

.tool svg {
    width: 30px;
    height: 30px;
}

.tool.active {
    background: #b3d6f4;
    border-color: #0078d7;
}

.sep {
    flex: none;
    width: 1px;
    height: 34px;
    margin: 0 4px;
    background: #8c8c8c;
}

.options-row {
    flex: none;
    height: 44px;
    background: #dadada;
}

.options-bar {
    width: max-content;
    height: 44px;
    display: flex;
    align-items: center;
    padding: 0 5px 0 6px;
    background: #f0f0f0;
}

.options-bar .sep {
    margin: 0 6px;
}

.options-bar .tool {
    margin: 0 0 0 2px;
}

select {
    height: 28px;
    padding: 0 24px 0 4px;
    border: 1px solid #d0d0d0;
    border-bottom-color: #aaa;
    border-radius: 3px;
    appearance: none;
    background: #fdfdfd url("data:image/svg+xml,%3Csvg xmlns='http://www.w3.org/2000/svg' width='10' height='6'%3E%3Cpath d='M0 0l5 5 5-5' fill='none' stroke='%23555'/%3E%3C/svg%3E") no-repeat right 5px center;
}

.track-select { width: 193px; }
.via-select { width: 186px; }
.layer-select { width: 156px; }
.grid-select { width: 209px; }
.zoom-select { width: 119px; }

.layer-pair {
    width: 24px;
    height: 34px;
    margin: 0 7px;
    background: linear-gradient(110deg, #b72d2d 70%, #4d7fc4 70%);
}

/* workspace */
.workspace {
    flex: 1;
    min-height: 0;
    display: flex;
}

.side-tools {
    flex: none;
    width: 44px;
    display: flex;
    flex-direction: column;
    padding: 5px 2px 0;
}

.side-tools .sep {
    width: 34px;
    height: 1px;
    margin: 4px 3px;
}

.unit {
    overflow: visible;
}

.unit text {
    font-size: 16px;
    font-weight: 600;
    text-anchor: middle;
    fill: #545454;
}

.more::after {
    content: "";
    position: absolute;
    right: 0;
    bottom: 0;
    width: 9px;
    height: 9px;
    background: linear-gradient(135deg, transparent 50%, #000 50%);
}

.canvas {
    flex: 1;
    min-width: 0;
    height: 100%;
    background: #001023;
    box-shadow: inset 0 1px #a0a0a0;
}

.sheet {
    fill: none;
    stroke: #c872a8;
    shape-rendering: crispEdges;
}

.sheet .paper {
    stroke: #848484;
}

.frame-marks, .title-block {
    font-family: "Liberation Sans", sans-serif;
    font-size: 9px;
    fill: #c872a8;
}

.frame-marks {
    text-anchor: middle;
}

.title-block {
    font-size: 10px;
}

.title-block .title {
    font-size: 12px;
    font-style: italic;
}

.crosshair {
    stroke: #8a939b;
    shape-rendering: crispEdges;
}

.draw-tools {
    width: 45px;
    padding-left: 3px;
}

/* right panel */
.panel {
    flex: none;
    width: 230px;
    border-left: 5px solid #dadada;
    font-size: 12px;
}

.panel h2 {
    height: 26px;
    padding-left: 4px;
    line-height: 26px;
    background: #b9b9b9;
}

.tabs {
    display: flex;
    align-items: flex-end;
    height: 33px;
    font-size: 14px;
}

.tab {
    width: 60px;
    height: 25px;
    padding-left: 5px;
    text-align: left;
    border: 1px solid #e3e3e3;
    border-width: 1px 1px 0 0;
}

.tab.selected {
    width: 63px;
    height: 27px;
    padding: 0 0 2px 8px;
    background: #f9f9f9;
}

.layers-page {
    margin-right: 2px;
    padding: 2px 1px 2px 4px;
    background: #f9f9f9;
    border: solid #e3e3e3;
    border-width: 0 1px 1px 0;
}

.layers-scroll {
    display: flex;
    height: 440px;
    background: #f0f0f0;
}

#layer-list {
    flex: 1;
    list-style: none;
    border-right: 1px solid #fff;
}

#layer-list li {
    height: 20px;
    display: flex;
    align-items: center;
    padding-left: 5px;
    line-height: 20px;
    font-size: 12px;
}

#layer-list li.selected {
    background: #e1e1e1;
}

.marker {
    width: 10px;
    height: 8px;
}

.selected .marker {
    background: #4040ff;
    clip-path: polygon(0 0, 4px 50%, 0 100%);
}

.swatch {
    width: 13px;
    height: 13px;
}

.eye {
    width: 16px;
    height: 16px;
    margin: 0 5px 0 6px;
}

.layers-scroll .scrollbar {
    width: 21px;
    padding: 21px 8px 0 7px;
}

.scrollbar span {
    display: block;
    background: #858585;
}

.layers-scroll .scrollbar span {
    height: 298px;
}

.display-options {
    display: flex;
    align-items: center;
    width: 207px;
    height: 22px;
    margin: 4px 0 0 5px;
    padding-left: 8px;
    background: #fff;
    color: #767676;
}

.triangle {
    margin-right: 3px;
    border: 4px solid transparent;
    border-left: 5px solid #555;
    border-right: 0;
}

.presets {
    display: flex;
    flex-direction: column;
    padding: 13px 7px 6px;
}

.presets label {
    height: 20px;
}

.presets select {
    margin-bottom: 4px;
    font-size: 14px;
}

.presets #viewports {
    margin-bottom: 0;
}

.panel .filter-title {
    height: 31px;
    border-top: 5px solid #dadada;
}

.filter {
    display: grid;
    grid-template-columns: 105px 1fr;
    padding: 6px 0 0 5px;
}

.filter label {
    height: 20px;
    gap: 3px;
}

label {
    display: flex;
    align-items: center;
    gap: 4px;
}

input[type="checkbox"] {
    flex: none;
    appearance: none;
    width: 16px;
    height: 16px;
    margin: 0;
    border: 1px solid #666;
    border-radius: 3px;
    background: #f7f7f7;
}

input[type="checkbox"]:checked {
    border-color: #005fb8;
    background: #005fb8 url("data:image/svg+xml,%3Csvg xmlns='http://www.w3.org/2000/svg' width='10' height='8'%3E%3Cpath d='M1 4l3 3 5-6' fill='none' stroke='%23fff'/%3E%3C/svg%3E") no-repeat center;
}

/* bottom bars */
.board-info {
    flex: none;
    height: 41px;
    display: flex;
    gap: 38px;
    padding: 0 14px;
    border-top: 1px solid #bbb;
    color: #6f6f6f;
}

.statusbar {
    flex: none;
    height: 28px;
    display: grid;
    grid-template-columns: 584px 97px 203px 322px 233px 77px 215px 1fr;
    align-items: center;
    border-top: 1px solid #d5d5d5;
    border-bottom: 1px solid #b5b0ae;
}

.statusbar span {
    height: 25px;
    padding-left: 4px;
    line-height: 27px;
    border-left: 1px solid #d5d5d5;
}

.statusbar span:first-child {
    border: 0;
}

/* update dialog */
.dialog {
    position: absolute;
    left: 94px;
    top: 110px;
    width: 707px;
    padding-bottom: 6px;
    border: 1px solid #8a8a8a;
    border-radius: 8px;
    background: #f0f0f0;
    box-shadow: 0 10px 36px rgba(0, 0, 0, 0.4);
    color: #000;
}

.dialog-title {
    height: 37px;
    display: flex;
    align-items: center;
    justify-content: space-between;
    padding: 0 14px 2px 8px;
    border-radius: 8px 8px 0 0;
    background: #f4f3ea;
}

.dialog-title svg {
    stroke: #000;
}

fieldset {
    margin: 0 9px;
    padding: 0 7px;
    border: 1px solid #dcdcdc;
}

legend {
    padding: 0 1px;
    height: 20px;
}

.dialog-options {
    margin-top: 10px;
    padding: 0 10px 6px;
}

.dialog-options legend {
    margin-left: -3px;
}

.dialog-options label {
    height: 25px;
}

.dialog-changes {
    margin-top: 17px;
    padding-bottom: 7px;
}

.log-row {
    display: flex;
    height: 223px;
    margin-top: 2px;
}

.log {
    flex: 1;
    display: flex;
    flex-direction: column;
    justify-content: flex-end;
    overflow: hidden;
    padding: 0 10px 44px;
    background: #fff;
}

.log p {
    flex: none;
    font: 16px/19px "Liberation Sans", sans-serif;
}

.log .total {
    margin-top: 38px;
}

.log-row .scrollbar {
    width: 20px;
    padding: 108px 7px 0;
}

.log-row .scrollbar span {
    height: 94px;
}

.show-row {
    display: flex;
    align-items: center;
    height: 32px;
    margin-top: 3px;
}

.show-row > span { width: 47px; }
.all { width: 77px; }
.errors { width: 72px; }
.warnings { width: 96px; }
.actions { width: 108px; }
.infos { flex: 1; }

.badge {
    width: 22px;
    height: 18px;
    margin-right: 20px;
    border-radius: 50%;
    background: #008000;
    color: #fff;
    font-size: 16px;
    text-align: center;
    line-height: 18px;
}

.push {
    width: 91px;
    height: 26px;
    border: 1px solid #d0d0d0;
    border-radius: 4px;
    background: #fdfdfd;
}

.show-row .push {
    margin-right: 4px;
}

.push.primary {
    width: 104px;
    border-color: #0078d4;
    background: #e0eef9;
}

.dialog-buttons {
    display: flex;
    justify-content: flex-end;
    gap: 10px;
    padding: 12px 9px 0;
}

.grip {
    position: absolute;
    right: 3px;
    bottom: 2px;
    width: 11px;
    height: 11px;
}

/* taskbar */
.taskbar {
    flex: none;
    height: 60px;
    display: flex;
    align-items: center;
    background: linear-gradient(90deg, #f5e4e0 0, #f4dfe1 31%, #e8e9dd 37%, #e6e5dd 65%, #ece5de 70%, #e7e9dd 80%);
}

.weather {
    display: flex;
    align-items: center;
    gap: 2px;
    width: 490px;
    padding-left: 26px;
    color: #111;
    text-decoration: none;
}

.weather svg {
    width: 36px;
    height: 44px;
}

.weather small {
    font-size: 14px;
    color: #5c5654;
}

.task {
    flex: none;
    position: relative;
    width: 55px;
    height: 60px;
}

.task svg {
    width: 30px;
    height: 30px;
    vertical-align: middle;
}

.search {
    width: 272px;
    height: 40px;
    margin: 0 5px 0 4px;
    display: flex;
    align-items: center;
    padding: 0 1px 0 14px;
    border: 1px solid #ddd2d0;
    border-bottom-color: #bbb;
    border-radius: 20px;
    background: linear-gradient(90deg, #fcf6f6, #f8f9f3);
}

.search svg {
    flex: none;
    width: 20px;
    height: 20px;
}

.search .golf {
    width: 64px;
    height: 30px;
}

.search input {
    flex: 1;
    min-width: 0;
    margin-left: 8px;
    border: 0;
    background: none;
    font-size: 16px;
}

.search input::placeholder {
    color: #605c5b;
}

.running::after,
.current::after {
    content: "";
    position: absolute;
    left: 24px;
    bottom: 6px;
    width: 8px;
    height: 4px;
    border-radius: 2px;
    background: #858682;
}

.current::after {
    left: 18px;
    width: 19px;
    background: #0078d4;
}

.current {
    background: linear-gradient(#f6f6f1, #f6f6f1) center / 44px 48px no-repeat;
}

.chrome {
    margin-left: 165px;
}

.tray {
    margin-left: auto;
    display: flex;
    align-items: center;
    padding-right: 22px;
}

.tray svg {
    width: 22px;
    height: 22px;
    vertical-align: middle;
}

.tray button {
    width: 40px;
}

.tray .language {
    width: 56px;
}

.tray .quick {
    width: 100px;
    display: flex;
    justify-content: center;
    gap: 8px;
}

.tray .clock {
    width: 88px;
    padding-right: 8px;
    text-align: right;
}

.tray button:last-child {
    width: 24px;
}
```

FILE: script.js
```js
const layers = [
    ['F.Cu', '#c83434'],
    ['B.Cu', '#4d7fc4'],
    ['F.Adhesive', '#840084'],
    ['B.Adhesive', '#000084'],
    ['F.Paste', '#a5948f'],
    ['B.Paste', '#00b2b2'],
    ['F.Silkscreen', '#f2eda1'],
    ['B.Silkscreen', '#e8b2a7'],
    ['F.Mask', 'repeating-conic-gradient(#532760 0 25%, #6b3b7a 0 50%) 0 0 / 10px 10px'],
    ['B.Mask', 'repeating-conic-gradient(#02675b 0 25%, #177d71 0 50%) 0 0 / 10px 10px'],
    ['User.Drawings', '#c2c2c2'],
    ['User.Comments', '#5994dc'],
    ['User.Eco1', '#b4dbd2'],
    ['User.Eco2', '#d8c852'],
    ['Edge.Cuts', '#d0d2cd'],
    ['Margin', '#ff26e2'],
    ['F.Courtyard', '#ff26e2'],
    ['B.Courtyard', '#26e9ff'],
    ['F.Fab', '#afafaf'],
    ['B.Fab', '#585d84'],
    ['User.1', '#c2c2c2'],
    ['User.2', '#5994dc']
];

const list = document.getElementById('layer-list');
layers.forEach(([name, color], i) => {
    const row = document.createElement('li');
    if (i === 0) row.classList.add('selected');
    row.innerHTML = `
        <span class="marker"></span>
        <span class="swatch" style="background: ${color}"></span>
        <svg class="eye"><use href="#eye"/></svg>
        <span>${name}</span>
    `;
    list.appendChild(row);
});
```
